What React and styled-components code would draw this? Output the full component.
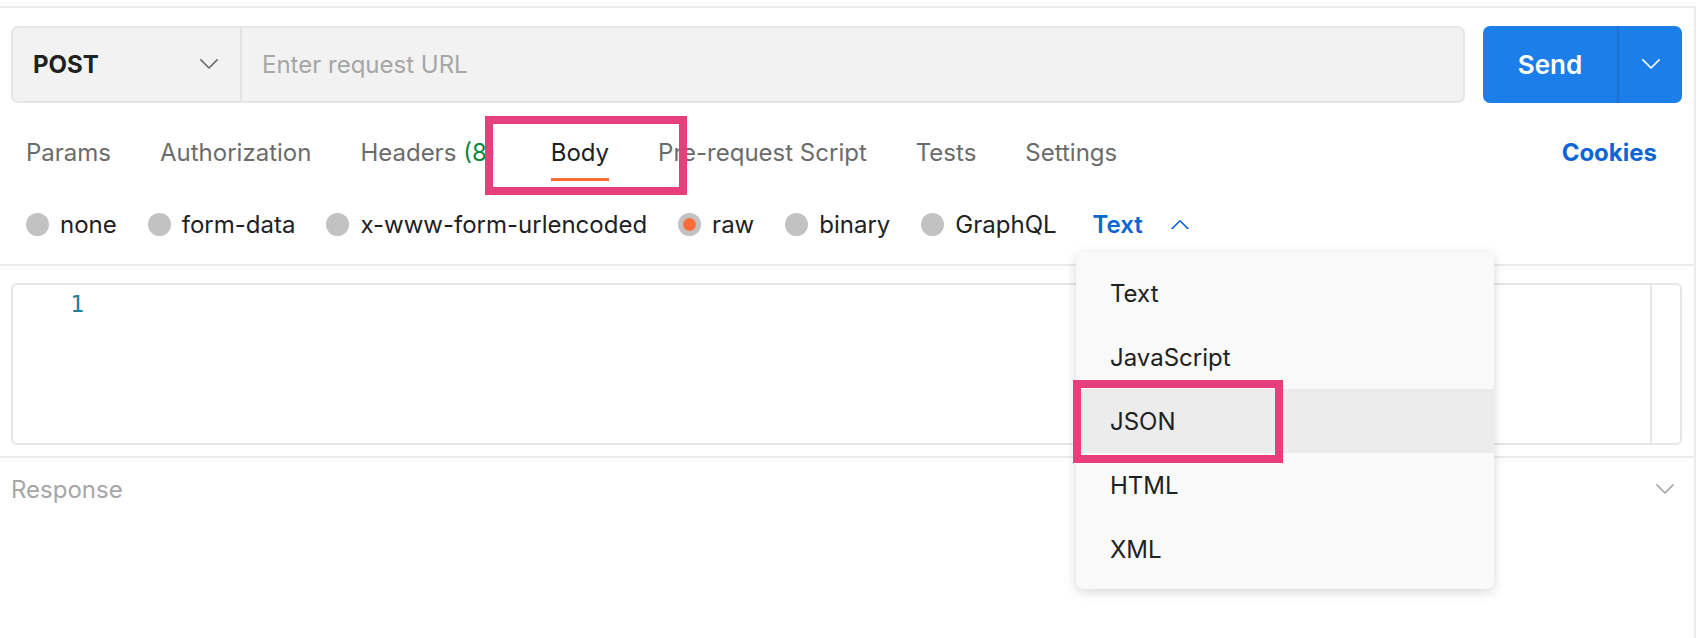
import React from "react";
import styled, { createGlobalStyle } from "styled-components";

const GlobalStyle = createGlobalStyle`
  html, body {
    margin: 0;
    padding: 0;
    background: #ffffff;
    font-family: Inter, "Noto Sans", sans-serif;
    color: #212121;
  }
`;

const Page = styled.div`
  position: relative;
  width: 1700px;
  height: 638px;
  padding-top: 6px;
  box-sizing: border-box;
  overflow: hidden;
`;

const Frame = styled.div`
  width: 1696px;
  height: 632px;
  box-sizing: border-box;
  border-top: 2px solid #ececec;
  border-right: 2px solid #ececec;
  display: flex;
  flex-direction: column;
`;

const RequestBar = styled.div`
  display: flex;
  gap: 18px;
  margin: 18px 12px 0 11px;
  height: 77px;
`;

const UrlBox = styled.div`
  flex: 1;
  display: flex;
  background: #f2f2f2;
  border: 2px solid #e6e6e6;
  border-radius: 7px;
  box-sizing: border-box;
`;

const Method = styled.div`
  width: 229px;
  display: flex;
  align-items: center;
  justify-content: space-between;
  padding: 0 22px 0 20px;
  box-sizing: border-box;
  border-right: 2px solid #e4e4e4;
  font-size: 24px;
  font-weight: 700;
  color: #212121;
`;

const Placeholder = styled.div`
  display: flex;
  align-items: center;
  padding-left: 20px;
  font-size: 24px;
  color: #a6a6a6;
`;

const SendButton = styled.div`
  width: 199px;
  display: flex;
  background: #1c7fe9;
  border-radius: 7px;
  color: #ffffff;
  overflow: hidden;
`;

const SendLabel = styled.div`
  flex: 1;
  display: flex;
  align-items: center;
  justify-content: center;
  font-size: 26px;
  font-weight: 600;
  border-right: 2px solid #1770d2;
`;

const SendArrow = styled.div`
  width: 63px;
  display: flex;
  align-items: center;
  justify-content: center;
`;

const TabBar = styled.div`
  display: flex;
  align-items: center;
  gap: 49px;
  height: 58px;
  margin-top: 20px;
  padding: 0 37px 0 26px;
`;

const Tab = styled.div`
  position: relative;
  height: 100%;
  display: flex;
  align-items: center;
  font-size: 24px;
  color: ${(p) => (p.$active ? "#212121" : "#6b6b6b")};
  white-space: nowrap;

  &::after {
    content: "";
    display: ${(p) => (p.$active ? "block" : "none")};
    position: absolute;
    left: 0;
    right: 0;
    bottom: 0;
    height: 3px;
    background: #ff6c37;
  }
`;

const Count = styled.span`
  color: #0a8a3a;
  margin-left: 7px;
  margin-right: 6px;
`;

const Cookies = styled.div`
  margin-left: auto;
  font-size: 24px;
  font-weight: 700;
  color: #0b66d4;
`;

const RadioRow = styled.div`
  display: flex;
  align-items: center;
  height: 50px;
  margin-top: 18px;
  padding: 0 26px 15px;
  border-bottom: 2px solid #ececec;
`;

const RadioItem = styled.div`
  display: flex;
  align-items: center;
  gap: 11px;
  margin-right: 31px;
  font-size: 24px;
  color: #212121;
`;

const Radio = styled.span`
  width: 23px;
  height: 23px;
  border-radius: 50%;
  background: #c2c2c2;
  display: flex;
  align-items: center;
  justify-content: center;

  &::after {
    content: "";
    display: ${(p) => (p.$checked ? "block" : "none")};
    width: 13px;
    height: 13px;
    border-radius: 50%;
    background: #ff6c37;
  }
`;

const LangSelect = styled.div`
  display: flex;
  align-items: center;
  gap: 28px;
  margin-left: 5px;
  font-size: 24px;
  font-weight: 600;
  color: #0b66d4;
`;

const Editor = styled.div`
  display: flex;
  margin: 17px 12px 0 11px;
  height: 162px;
  border: 2px solid #e6e6e6;
  border-radius: 6px;
  box-sizing: border-box;
`;

const Gutter = styled.div`
  width: 71px;
  padding-top: 3px;
  text-align: right;
  font-family: "DejaVu Sans Mono", "Liberation Mono", monospace;
  font-size: 23px;
  line-height: 32px;
  color: #2a7d97;
`;

const Code = styled.div`
  flex: 1;
`;

const ScrollTrack = styled.div`
  width: 28px;
  border-left: 2px solid #e6e6e6;
`;

const ResponseBar = styled.div`
  display: flex;
  align-items: center;
  justify-content: space-between;
  margin-top: 11px;
  padding: 5px 20px 0 11px;
  height: 52px;
  border-top: 2px solid #ececec;
  font-size: 24px;
  color: #a6a6a6;
`;

const Menu = styled.div`
  position: absolute;
  left: 1076px;
  top: 252px;
  width: 418px;
  padding: 9px 0 8px;
  background: #f9f9f9;
  border-radius: 7px;
  box-shadow: 0 3px 12px rgba(0, 0, 0, 0.16);
`;

const MenuItem = styled.div`
  height: 64px;
  display: flex;
  align-items: center;
  padding-left: 34px;
  font-size: 24px;
  color: #212121;
  background: ${(p) => (p.$hover ? "#ececec" : "transparent")};
`;

const Highlight = styled.div`
  position: absolute;
  box-sizing: border-box;
  border: 8px solid #e63f7b;
`;

const Chevron = ({ up, color = "#6b6b6b", size = 18 }) => (
  <svg width={size} height={size * 0.6} viewBox="0 0 20 12" fill="none">
    <polyline
      points={up ? "1,11 10,2 19,11" : "1,1 10,10 19,1"}
      stroke={color}
      strokeWidth="1.8"
      strokeLinecap="round"
      strokeLinejoin="round"
    />
  </svg>
);

const tabs = ["Params", "Authorization", "Headers", "Body", "Pre-request Script", "Tests", "Settings"];
const bodyTypes = ["none", "form-data", "x-www-form-urlencoded", "raw", "binary", "GraphQL"];
const languages = ["Text", "JavaScript", "JSON", "HTML", "XML"];

export default function App() {
  return (
    <Page>
      <GlobalStyle />
      <Frame>
        <RequestBar>
          <UrlBox>
            <Method>
              POST
              <Chevron />
            </Method>
            <Placeholder>Enter request URL</Placeholder>
          </UrlBox>
          <SendButton>
            <SendLabel>Send</SendLabel>
            <SendArrow>
              <Chevron color="#ffffff" />
            </SendArrow>
          </SendButton>
        </RequestBar>

        <TabBar>
          {tabs.map((t) => (
            <Tab key={t} $active={t === "Body"}>
              {t}
              {t === "Headers" && <Count>(8)</Count>}
            </Tab>
          ))}
          <Cookies>Cookies</Cookies>
        </TabBar>

        <RadioRow>
          {bodyTypes.map((b) => (
            <RadioItem key={b}>
              <Radio $checked={b === "raw"} />
              {b}
            </RadioItem>
          ))}
          <LangSelect>
            Text
            <Chevron up color="#0b66d4" />
          </LangSelect>
        </RadioRow>

        <Editor>
          <Gutter>1</Gutter>
          <Code />
          <ScrollTrack />
        </Editor>

        <ResponseBar>
          Response
          <Chevron color="#a6a6a6" />
        </ResponseBar>
      </Frame>

      <Menu>
        {languages.map((l) => (
          <MenuItem key={l} $hover={l === "JSON"}>
            {l}
          </MenuItem>
        ))}
      </Menu>

      <Highlight style={{ left: 485, top: 116, width: 202, height: 79 }} />
      <Highlight style={{ left: 1073, top: 380, width: 210, height: 83 }} />
    </Page>
  );
}
